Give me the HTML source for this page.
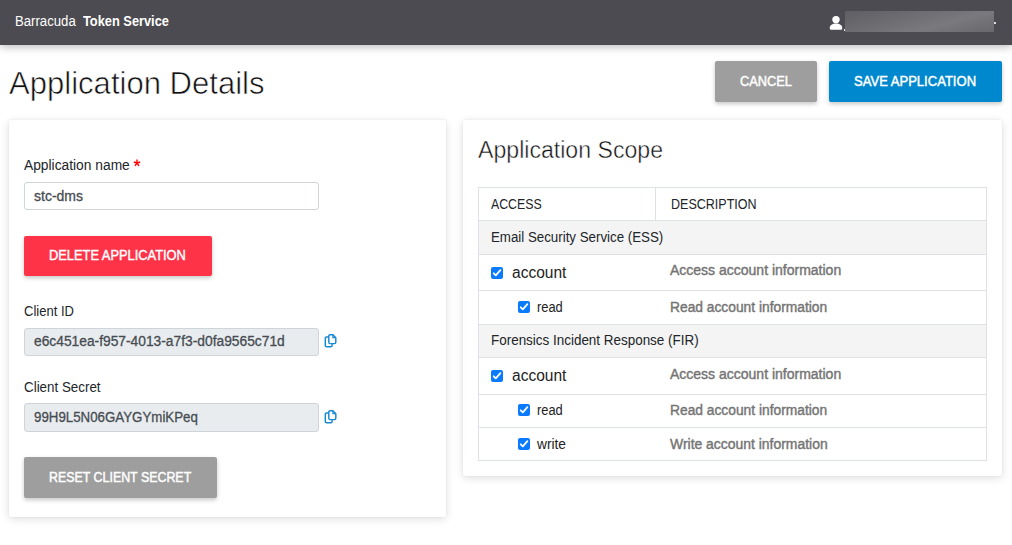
<!DOCTYPE html>
<html><head><meta charset="utf-8">
<style>
*{box-sizing:border-box;margin:0;padding:0}
html,body{width:1012px;height:545px;overflow:hidden;background:#fff;font-family:"Liberation Sans",sans-serif;position:relative}
.a{position:absolute;white-space:nowrap;line-height:14px;font-size:14px}
.s{display:inline-block;transform-origin:0 50%}
#hdr{position:absolute;left:0;top:0;width:1012px;height:45px;background:#4c4b51;box-shadow:0 1px 9px rgba(0,0,0,.33);z-index:2}
.card{position:absolute;background:#fff;border-radius:2px;box-shadow:0 2px 10px rgba(0,0,0,.13),0 0 2px rgba(0,0,0,.08)}
.btn{position:absolute;border-radius:2px;box-shadow:0 2px 4px rgba(0,0,0,.22)}
.btxt{color:#fff;-webkit-text-stroke:0.45px #fff}
.inp{position:absolute;border:1px solid #ced4da;border-radius:3px;background:#fff}
.inp.dis{background:#e9ecef}
.lbl{color:#212529}
.val{color:#464c52;-webkit-text-stroke:0.3px #464c52}
.hline{position:absolute;left:478px;width:509px;height:1px;background:#dee2e6}
.grp{position:absolute;left:479px;width:507px;background:#f4f4f4}
.cb{position:absolute;width:12px;height:12px;border-radius:2px;background:#0b7bfd}
.cb svg{position:absolute;left:0;top:0}
.desc{color:#747474;-webkit-text-stroke:0.4px #747474}
.copy{position:absolute;width:13px;height:15px}
</style></head><body>

<div id="hdr">
  <div class="a" style="left:15px;top:14px;color:#fff"><span class="s" style="transform:scaleX(.94)">Barracuda</span></div>
  <div class="a" style="left:83px;top:14px;color:#fff;font-weight:bold"><span class="s" style="transform:scaleX(.915)">Token Service</span></div>
  <!-- user icon -->
  <svg style="position:absolute;left:829px;top:15px" width="14" height="16" viewBox="0 0 14 16">
    <circle cx="7" cy="4.6" r="3.7" fill="#fff"/>
    <path d="M0.8 13.6 V12.6 C0.8 10 3.5 8.4 7 8.4 C10.5 8.4 13.2 10 13.2 12.6 V13.6 Q13.2 14.8 12 14.8 H2 Q0.8 14.8 0.8 13.6 Z" fill="#fff"/>
  </svg>
  <div style="position:absolute;left:845px;top:11px;width:149px;height:21px;background:linear-gradient(165deg,#5f5e63 0%,#6d6c71 35%,#7a797e 65%,#68676c 100%)"></div>
  <div style="position:absolute;left:844px;top:29px;width:1px;height:2px;background:#eee"></div>
  <div style="position:absolute;left:994px;top:22px;width:2px;height:2px;background:#ddd"></div>
</div>

<div class="a" style="left:9px;top:68px;font-size:31px;line-height:31px;color:#111;-webkit-text-stroke:0.6px #fff"><span class="s" style="transform:scaleX(1.002)">Application Details</span></div>

<div class="btn" style="left:715px;top:61px;width:102px;height:41px;background:#9e9e9e"></div>
<div class="a btxt" style="left:740px;top:74px"><span class="s" style="transform:scaleX(.915)">CANCEL</span></div>
<div class="btn" style="left:829px;top:61px;width:173px;height:41px;background:#0088ce"></div>
<div class="a btxt" style="left:854px;top:74px"><span class="s" style="transform:scaleX(.932)">SAVE APPLICATION</span></div>

<!-- left card -->
<div class="card" style="left:9px;top:120px;width:437px;height:397px"></div>
<div class="a lbl" style="left:24px;top:158px"><span class="s" style="transform:scaleX(.985)">Application name</span></div>
<svg style="position:absolute;left:133px;top:159px" width="8" height="8" viewBox="0 0 8 8"><g stroke="#f00" stroke-width="1.4" stroke-linecap="butt"><path d="M4 0.6 V4"/><path d="M4 4 L0.8 3"/><path d="M4 4 L7.2 3"/><path d="M4 4 L2 6.9"/><path d="M4 4 L6 6.9"/></g></svg>
<div class="inp" style="left:24px;top:182px;width:295px;height:28px"></div>
<div class="a val" style="left:34px;top:189px">stc-dms</div>

<div class="btn" style="left:24px;top:236px;width:188px;height:40px;background:#ff3347"></div>
<div class="a btxt" style="left:49px;top:248px"><span class="s" style="transform:scaleX(.918)">DELETE APPLICATION</span></div>

<div class="a lbl" style="left:24px;top:304px"><span class="s" style="transform:scaleX(.93)">Client ID</span></div>
<div class="inp dis" style="left:24px;top:328px;width:295px;height:28px"></div>
<div class="a val" style="left:34px;top:334px"><span class="s" style="transform:scaleX(.985)">e6c451ea-f957-4013-a7f3-d0fa9565c71d</span></div>
<svg class="copy" style="left:324px;top:333px" viewBox="0 0 13 15"><path d="M4.8 4 H2.6 Q1.3 4 1.3 5.3 V12.4 Q1.3 13.7 2.6 13.7 H6.8 Q8.1 13.7 8.1 12.4 V10.6" fill="none" stroke="#1689d3" stroke-width="1.45"/><path d="M6.1 1.8 H8.9 L11.8 4.7 V9.3 Q11.8 10.6 10.5 10.6 H6.1 Q4.8 10.6 4.8 9.3 V3.1 Q4.8 1.8 6.1 1.8 Z" fill="none" stroke="#1689d3" stroke-width="1.45" stroke-linejoin="round"/><path d="M8.9 1.8 V4.7 H11.8" fill="none" stroke="#1689d3" stroke-width="1.2" stroke-linejoin="round"/></svg>

<div class="a lbl" style="left:24px;top:380px"><span class="s" style="transform:scaleX(.955)">Client Secret</span></div>
<div class="inp dis" style="left:24px;top:403px;width:295px;height:29px"></div>
<div class="a val" style="left:34px;top:410px"><span class="s" style="transform:scaleX(.95)">99H9L5N06GAYGYmiKPeq</span></div>
<svg class="copy" style="left:324px;top:409px" viewBox="0 0 13 15"><path d="M4.8 4 H2.6 Q1.3 4 1.3 5.3 V12.4 Q1.3 13.7 2.6 13.7 H6.8 Q8.1 13.7 8.1 12.4 V10.6" fill="none" stroke="#1689d3" stroke-width="1.45"/><path d="M6.1 1.8 H8.9 L11.8 4.7 V9.3 Q11.8 10.6 10.5 10.6 H6.1 Q4.8 10.6 4.8 9.3 V3.1 Q4.8 1.8 6.1 1.8 Z" fill="none" stroke="#1689d3" stroke-width="1.45" stroke-linejoin="round"/><path d="M8.9 1.8 V4.7 H11.8" fill="none" stroke="#1689d3" stroke-width="1.2" stroke-linejoin="round"/></svg>

<div class="btn" style="left:24px;top:457px;width:193px;height:41px;background:#9e9e9e"></div>
<div class="a btxt" style="left:49px;top:470px"><span class="s" style="transform:scaleX(.886)">RESET CLIENT SECRET</span></div>

<!-- right card -->
<div class="card" style="left:463px;top:120px;width:539px;height:356px"></div>
<div class="a" style="left:478px;top:139px;font-size:23px;line-height:23px;color:#111;-webkit-text-stroke:0.45px #fff"><span class="s" style="transform:scaleX(1.005)">Application Scope</span></div>

<!-- table -->
<div class="grp" style="top:221px;height:33px"></div>
<div class="grp" style="top:325px;height:32px"></div>
<div class="hline" style="top:187px"></div>
<div class="hline" style="top:220px"></div>
<div class="hline" style="top:254px"></div>
<div class="hline" style="top:290px"></div>
<div class="hline" style="top:324px"></div>
<div class="hline" style="top:357px"></div>
<div class="hline" style="top:394px"></div>
<div class="hline" style="top:427px"></div>
<div class="hline" style="top:460px"></div>
<div style="position:absolute;left:478px;top:187px;width:1px;height:274px;background:#dee2e6"></div>
<div style="position:absolute;left:986px;top:187px;width:1px;height:274px;background:#dee2e6"></div>
<div style="position:absolute;left:655px;top:187px;width:1px;height:34px;background:#dee2e6"></div>

<div class="a lbl" style="left:491px;top:197px"><span class="s" style="transform:scaleX(.88)">ACCESS</span></div>
<div class="a lbl" style="left:671px;top:197px"><span class="s" style="transform:scaleX(.895)">DESCRIPTION</span></div>

<div class="a lbl" style="left:491px;top:230px"><span class="s" style="transform:scaleX(.95)">Email Security Service (ESS)</span></div>

<div class="cb" style="left:491px;top:267px"><svg width="12" height="12" viewBox="0 0 12 12"><path d="M2.7 6.3 L4.8 8.3 L9.4 3.1" fill="none" stroke="#fff" stroke-width="1.75" stroke-linecap="round" stroke-linejoin="round"/></svg></div>
<div class="a" style="left:512px;top:265px;font-size:16px;line-height:16px;color:#222"><span class="s" style="transform:scaleX(.97)">account</span></div>
<div class="a desc" style="left:670px;top:263px">Access account information</div>

<div class="cb" style="left:518px;top:301px"><svg width="12" height="12" viewBox="0 0 12 12"><path d="M2.7 6.3 L4.8 8.3 L9.4 3.1" fill="none" stroke="#fff" stroke-width="1.75" stroke-linecap="round" stroke-linejoin="round"/></svg></div>
<div class="a" style="left:537px;top:300px;color:#222"><span class="s" style="transform:scaleX(.92)">read</span></div>
<div class="a desc" style="left:670px;top:300px"><span class="s" style="transform:scaleX(.985)">Read account information</span></div>

<div class="a lbl" style="left:491px;top:333px"><span class="s" style="transform:scaleX(.96)">Forensics Incident Response (FIR)</span></div>

<div class="cb" style="left:491px;top:370px"><svg width="12" height="12" viewBox="0 0 12 12"><path d="M2.7 6.3 L4.8 8.3 L9.4 3.1" fill="none" stroke="#fff" stroke-width="1.75" stroke-linecap="round" stroke-linejoin="round"/></svg></div>
<div class="a" style="left:512px;top:368px;font-size:16px;line-height:16px;color:#222"><span class="s" style="transform:scaleX(.97)">account</span></div>
<div class="a desc" style="left:670px;top:367px">Access account information</div>

<div class="cb" style="left:518px;top:404px"><svg width="12" height="12" viewBox="0 0 12 12"><path d="M2.7 6.3 L4.8 8.3 L9.4 3.1" fill="none" stroke="#fff" stroke-width="1.75" stroke-linecap="round" stroke-linejoin="round"/></svg></div>
<div class="a" style="left:537px;top:403px;color:#222"><span class="s" style="transform:scaleX(.92)">read</span></div>
<div class="a desc" style="left:670px;top:403px"><span class="s" style="transform:scaleX(.985)">Read account information</span></div>

<div class="cb" style="left:518px;top:438px"><svg width="12" height="12" viewBox="0 0 12 12"><path d="M2.7 6.3 L4.8 8.3 L9.4 3.1" fill="none" stroke="#fff" stroke-width="1.75" stroke-linecap="round" stroke-linejoin="round"/></svg></div>
<div class="a" style="left:537px;top:437px;color:#222"><span class="s" style="transform:scaleX(.98)">write</span></div>
<div class="a desc" style="left:670px;top:437px"><span class="s" style="transform:scaleX(.995)">Write account information</span></div>

</body></html>
